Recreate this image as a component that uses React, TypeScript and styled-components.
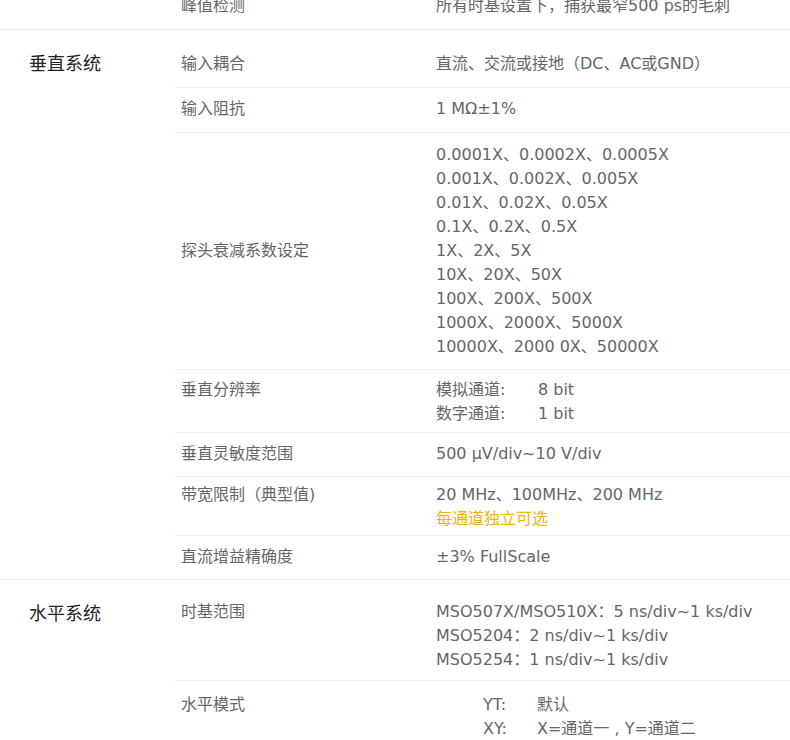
import React from "react";
import styled, { createGlobalStyle } from "styled-components";

const GlobalStyle = createGlobalStyle`
  html, body {
    margin: 0;
    padding: 0;
    background: #ffffff;
    overflow: hidden;
  }
  body {
    font-family: "DejaVu Sans", "Noto Sans CJK SC", sans-serif;
  }
`;

const Page = styled.div`
  width: 790px;
  margin-top: -15px;
`;

const Section = styled.section`
  display: grid;
  grid-template-columns: 175px 1fr;
  padding-top: ${(p: { $top?: number }) => (p.$top ?? 13)}px;
  border-bottom: 1px solid #efefef;
`;

const SectionTitle = styled.h3`
  margin: 0;
  padding: 9px 0 0 29px;
  font-size: 18px;
  line-height: 24px;
  font-weight: 400;
  color: #222;
`;

const Rows = styled.div`
  display: flex;
  flex-direction: column;
`;

const Row = styled.div<{ $pt?: number; $pb?: number; $center?: boolean }>`
  display: grid;
  grid-template-columns: 261px 1fr;
  align-items: ${(p) => (p.$center ? "center" : "start")};
  padding: ${(p) => p.$pt ?? 9}px 0 ${(p) => p.$pb ?? 11}px;
  border-bottom: 1px solid #f1f1f1;
  &:last-child {
    border-bottom: none;
  }
`;

const Label = styled.div`
  padding-left: 6px;
  font-size: 16px;
  line-height: 24px;
  color: #666;
`;

const Value = styled.div`
  font-size: 16px;
  line-height: 24px;
  color: #666;
`;

const Line = styled.div<{ $accent?: boolean }>`
  color: ${(p) => (p.$accent ? "#f5b300" : "inherit")};
`;

const Pairs = styled.div<{ $key: number; $indent?: number }>`
  display: grid;
  grid-template-columns: ${(p) => p.$key}px auto;
  justify-content: start;
  padding-left: ${(p) => p.$indent ?? 0}px;
`;

const probe = [
  "0.0001X、0.0002X、0.0005X",
  "0.001X、0.002X、0.005X",
  "0.01X、0.02X、0.05X",
  "0.1X、0.2X、0.5X",
  "1X、2X、5X",
  "10X、20X、50X",
  "100X、200X、500X",
  "1000X、2000X、5000X",
  "10000X、2000 0X、50000X",
];

export default function App() {
  return (
    <>
      <GlobalStyle />
      <Page>
        <Section $top={0}>
          <div />
          <Rows>
            <Row>
              <Label>峰值检测</Label>
              <Value>所有时基设置下，捕获最窄500 ps的毛刺</Value>
            </Row>
          </Rows>
        </Section>

        <Section>
          <SectionTitle>垂直系统</SectionTitle>
          <Rows>
            <Row>
              <Label>输入耦合</Label>
              <Value>直流、交流或接地（DC、AC或GND）</Value>
            </Row>
            <Row>
              <Label>输入阻抗</Label>
              <Value>1 MΩ±1%</Value>
            </Row>
            <Row $pt={10} $pb={10} $center>
              <Label>探头衰减系数设定</Label>
              <Value>
                {probe.map((l) => (
                  <Line key={l}>{l}</Line>
                ))}
              </Value>
            </Row>
            <Row $pt={8} $pb={6}>
              <Label>垂直分辨率</Label>
              <Value>
                <Pairs $key={102}>
                  <span>模拟通道:</span>
                  <span>8 bit</span>
                  <span>数字通道:</span>
                  <span>1 bit</span>
                </Pairs>
              </Value>
            </Row>
            <Row $pt={9} $pb={10}>
              <Label>垂直灵敏度范围</Label>
              <Value>500 μV/div~10 V/div</Value>
            </Row>
            <Row $pt={6} $pb={4}>
              <Label>带宽限制（典型值)</Label>
              <Value>
                <Line>20 MHz、100MHz、200 MHz</Line>
                <Line $accent>每通道独立可选</Line>
              </Value>
            </Row>
            <Row $pt={9} $pb={10}>
              <Label>直流增益精确度</Label>
              <Value>±3% FullScale</Value>
            </Row>
          </Rows>
        </Section>

        <Section>
          <SectionTitle>水平系统</SectionTitle>
          <Rows>
            <Row $pt={7} $pb={8}>
              <Label>时基范围</Label>
              <Value>
                <Line>MSO507X/MSO510X：5 ns/div~1 ks/div</Line>
                <Line>MSO5204：2 ns/div~1 ks/div</Line>
                <Line>MSO5254：1 ns/div~1 ks/div</Line>
              </Value>
            </Row>
            <Row $pt={12} $pb={10}>
              <Label>水平模式</Label>
              <Value>
                <Pairs $key={54} $indent={47}>
                  <span>YT:</span>
                  <span>默认</span>
                  <span>XY:</span>
                  <span>X=通道一 , Y=通道二</span>
                </Pairs>
              </Value>
            </Row>
          </Rows>
        </Section>
      </Page>
    </>
  );
}
